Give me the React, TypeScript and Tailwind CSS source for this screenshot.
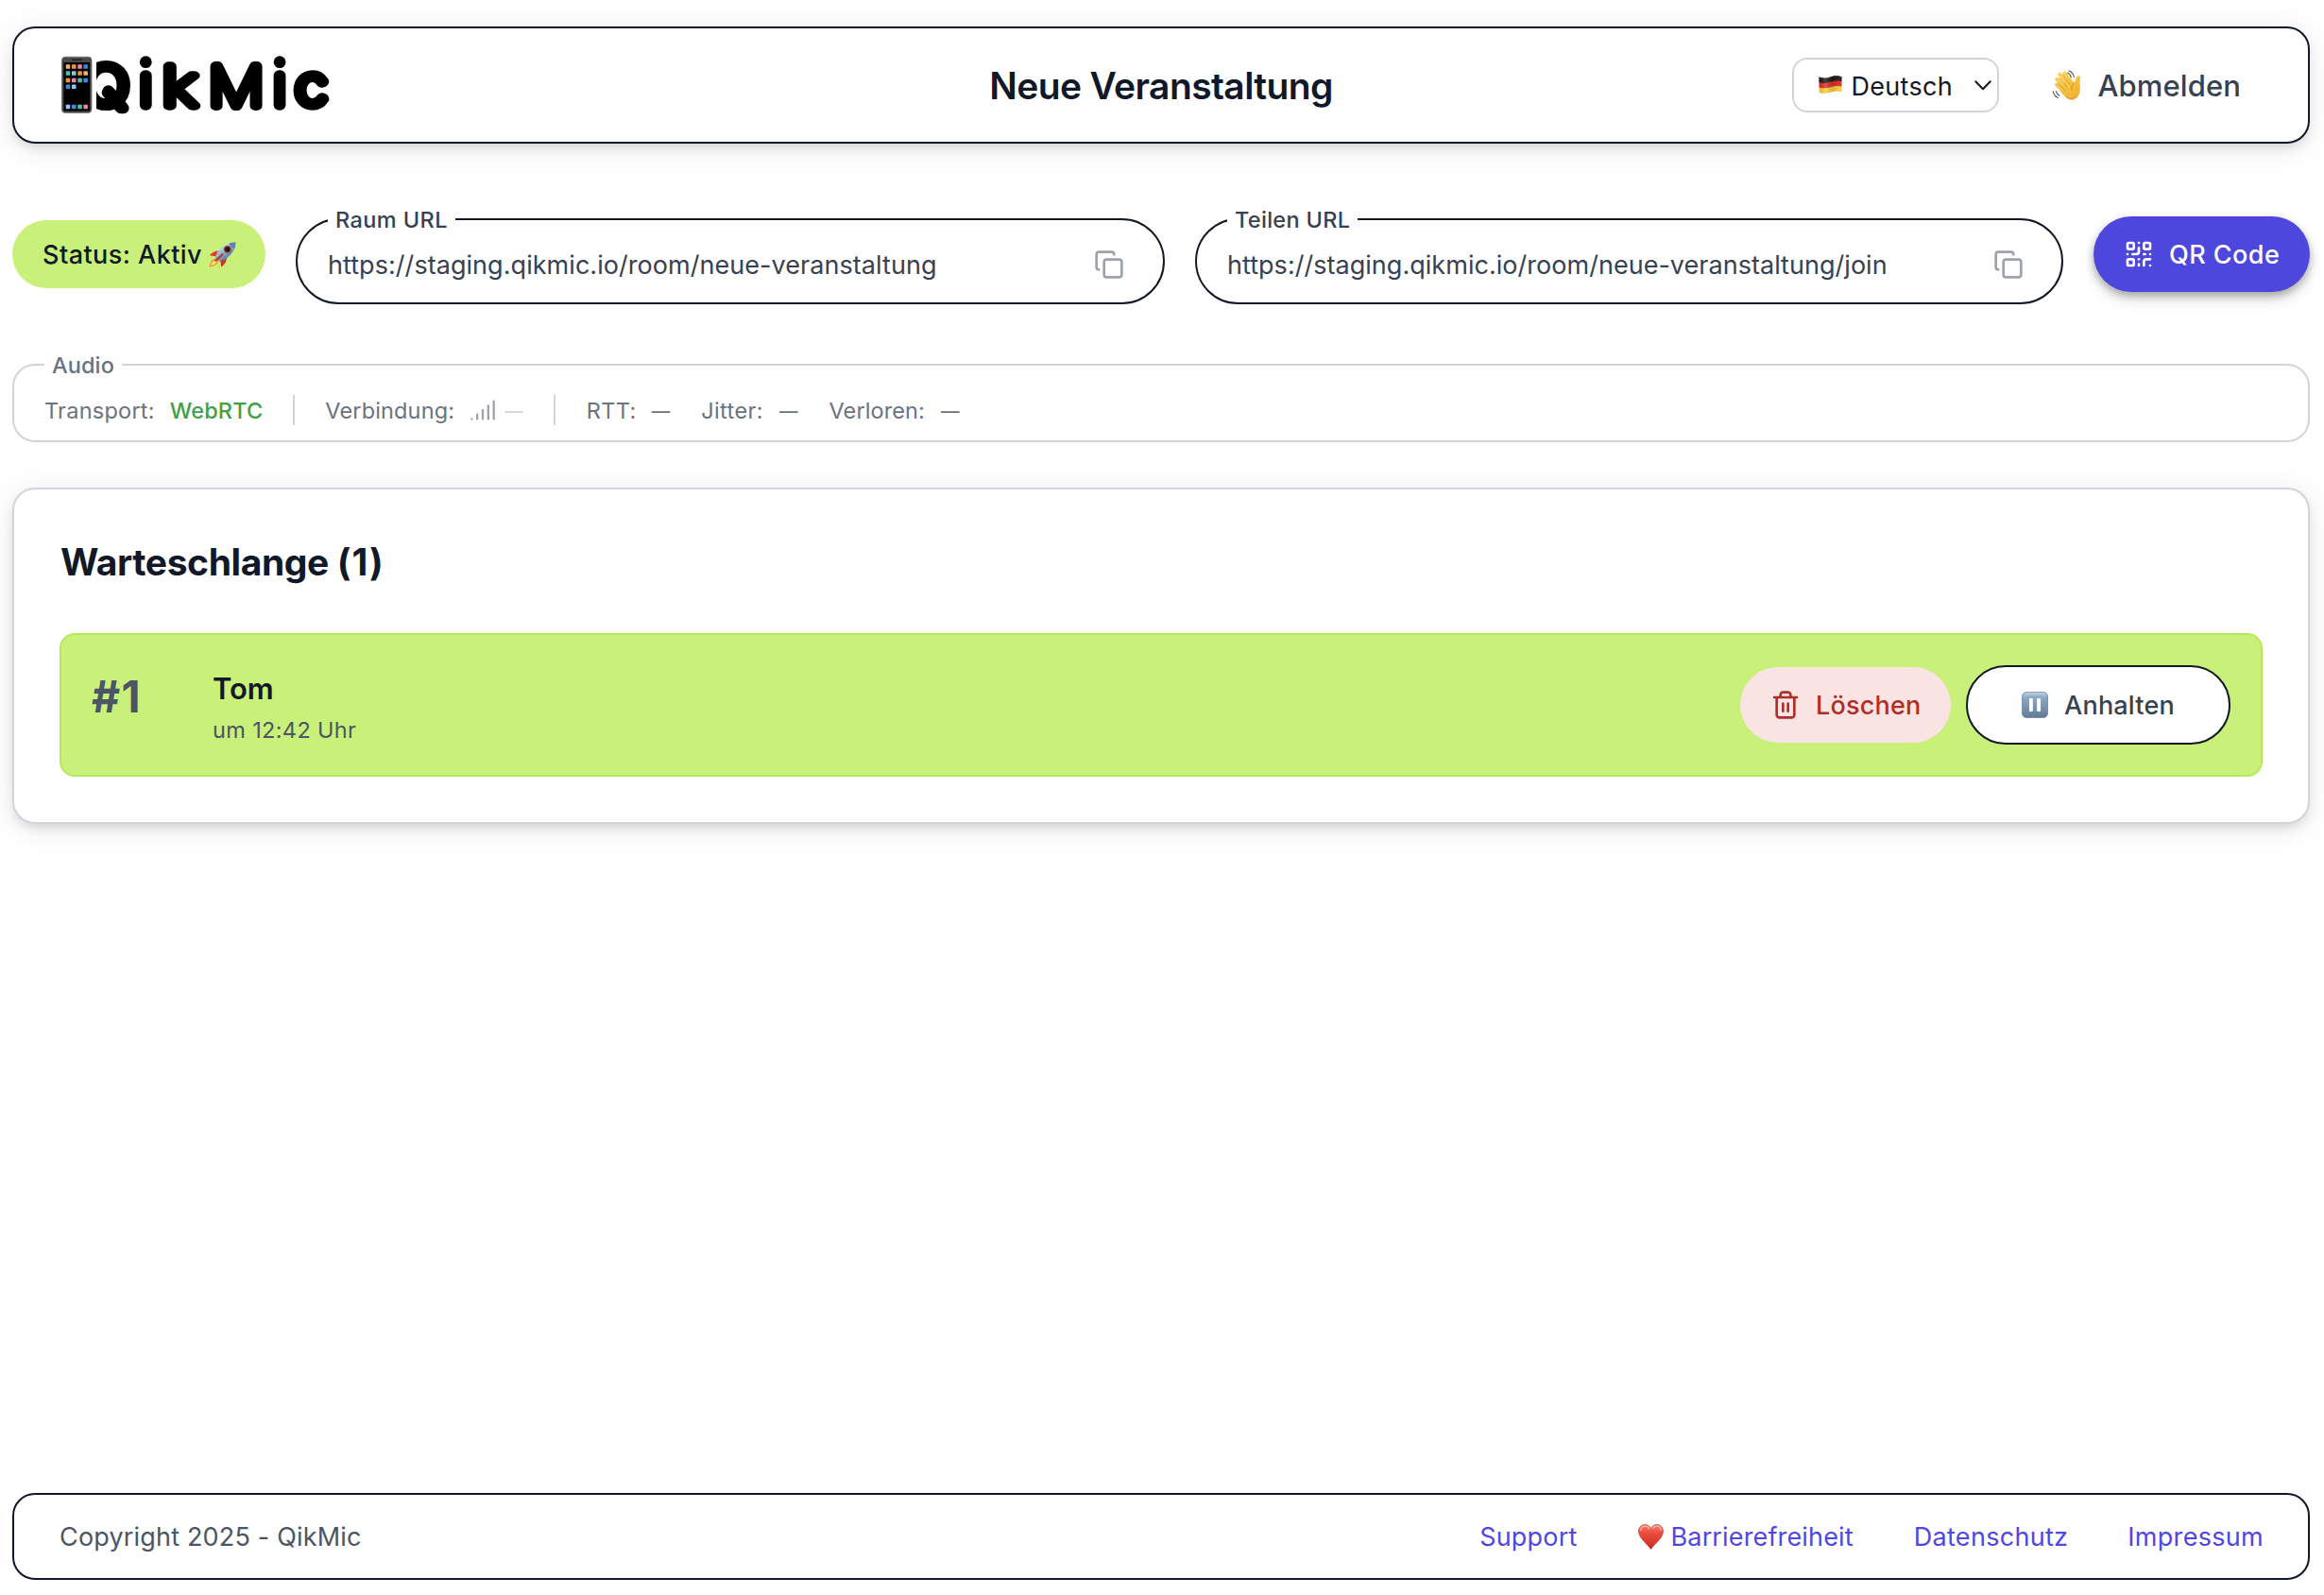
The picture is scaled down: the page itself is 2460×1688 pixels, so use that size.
import React from 'react';
import { Copy, QrCode, Signal } from 'lucide-react';

const APPS: [number, number, string][] = [
  [69.7, 68.3, '#e8b777'], [76, 68.3, '#ef9535'], [82.3, 68.3, '#ee82b0'], [88.4, 68.3, '#3d8bd4'],
  [69.7, 75.3, '#55bfa5'], [76, 75.3, '#8cc8f2'], [82.3, 75.3, '#ef9535'], [88.4, 75.3, '#e8b777'],
  [69.7, 82.7, '#ef9535'], [76, 82.7, '#ee82b0'], [82.3, 82.7, '#55bfa5'], [88.4, 82.7, '#3d8bd4'],
  [69.7, 89.5, '#3d8bd4'], [76, 89.5, '#8cc8f2'],
  [69.7, 110.8, '#8cc8f2'], [76, 110.8, '#3d8bd4'], [82.3, 110.8, '#55bfa5'], [88.4, 110.8, '#ee82b0'],
];

function Logo() {
  return (
    <svg viewBox="63 56 290 68" className="block h-[68px] w-[290px]" role="img" aria-label="QikMic">
      <g fontFamily="Inter" fontWeight="100" fontSize="56" fill="#000" stroke="#000" strokeWidth="11.6" strokeLinejoin="round" strokeLinecap="round">
        <text transform="translate(88.8 110.8) scale(1.13 1)">Q</text>
        <line x1="114.6" y1="96.4" x2="129" y2="113" strokeWidth="12.4" />
        <text transform="translate(148.2 110.8)">ı</text>
        <circle cx="154.3" cy="65.7" r="6.4" stroke="none" />
        <text transform="translate(171.4 111.9) scale(1.32 1)" fontSize="58" strokeWidth="9.4">k</text>
        <text transform="translate(221.1 111.5) scale(1.14 1)" fontSize="57" strokeWidth="10.2">M</text>
        <text transform="translate(290 110.8)">ı</text>
        <circle cx="296.1" cy="65.7" r="6.4" stroke="none" />
        <text transform="translate(313 110.8) scale(1.09 1)">c</text>
      </g>
      <rect x="63" y="56" width="39" height="68" fill="#fff" />
      <rect x="65.4" y="60.2" width="31.6" height="59.2" rx="3.6" fill="#4a4a4a" stroke="#777" strokeWidth="0.8" />
      <rect x="67.4" y="66" width="27.8" height="51.6" rx="1" fill="#000" />
      <rect x="76" y="62.6" width="11" height="1.3" rx="0.6" fill="#222" />
      {APPS.map(([x, y, c], i) => <rect key={i} x={x} y={y} width="4.5" height="4.5" rx="0.5" fill={c} />)}
    </svg>
  );
}

function FlagIcon() {
  return (
    <svg viewBox="0 0 25 20" className="h-5 w-[25px] shrink-0">
      <defs>
        <clipPath id="flag"><path d="M.6 1.6C5 3.2 8.500 2.800 12.500 1.400S20.500 -.2 24.400 1.200V17.400C20.500 16 16.500 16.400 12.500 17.800S5 19.400.6 18z" /></clipPath>
        <linearGradient id="flag-shade" x1="0" x2="1" y1="0" y2="0">
          <stop offset="0" stopColor="#000" stopOpacity=".1" /><stop offset=".3" stopColor="#fff" stopOpacity=".18" /><stop offset=".6" stopColor="#000" stopOpacity=".14" /><stop offset="1" stopColor="#fff" stopOpacity=".08" />
        </linearGradient>
      </defs>
      <g clipPath="url(#flag)">
        <rect width="25" height="20" fill="#f7cf3c" />
        <path d="M0 -2H25V11.600C20.500 10.400 16.500 10.800 12.500 12.200S5 13.800 0 12.400z" fill="#df2a20" />
        <path d="M0 -2H25V6.200C20.500 5 16.500 5.400 12.500 6.800S5 8.400 0 7z" fill="#1b1b1b" />
        <rect width="25" height="20" fill="url(#flag-shade)" />
      </g>
    </svg>
  );
}

function WaveIcon() {
  return (
    <svg viewBox="0 0 32 33" className="h-[33px] w-8 shrink-0">
      <defs>
        <linearGradient id="hand" gradientUnits="userSpaceOnUse" x1="6" y1="4" x2="24" y2="30"><stop offset="0" stopColor="#fbd65a" /><stop offset="1" stopColor="#f0b02f" /></linearGradient>
      </defs>
      <g fill="none" stroke="url(#hand)" strokeLinecap="round">
        <path d="M13.600 3.600 21 14" strokeWidth="4.100" />
        <path d="M8.300 4.700 17.500 17" strokeWidth="4.100" />
        <path d="M5.200 9.800 15 20.500" strokeWidth="4" />
        <path d="M4.800 15.600 14 24" strokeWidth="3.700" />
      </g>
      <path d="M10 19.500 20.500 10.500 23.500 13.800C25 12.500 24.600 10 25.700 8C26.600 6.200 29.400 5.600 30 7.200C30.200 9.500 29.400 12 29.600 15C30 20 30.400 24 27.400 28C24 32.400 19 32.600 15.400 29.500L8.500 22.500z" fill="url(#hand)" />
      <path d="M11.300 4.800 18.600 14.600M7.600 8.700 16 18.200M6.200 14 14.200 21.700M23.500 13.800C21 15.500 20.200 18.500 21.200 21.500" fill="none" stroke="#c98417" strokeWidth=".8" strokeLinecap="round" />
      <path d="M14.500 28.200C18.500 31.600 23.500 31.400 26.800 27.900" fill="none" stroke="#c98417" strokeWidth="1" strokeLinecap="round" opacity=".5" />
      <g fill="none" stroke="#565656" strokeWidth="1.100" strokeLinecap="round">
        <path d="M16.600 3C18.600 4 19.900 5.800 20.400 8M18.200.9C21.200 2 23 4.800 23.400 7.800" />
        <path d="M4.300 22.600C4.900 24.700 6.200 26.200 8 27.200M1.200 22.900C1.900 25.900 3.800 28.200 6.300 29.400" />
      </g>
    </svg>
  );
}

function RocketIcon() {
  return (
    <svg viewBox="0 0 29 27" className="h-[27px] w-[29px] shrink-0">
      <defs>
        <linearGradient id="rocket" x1=".2" y1=".1" x2=".8" y2=".9"><stop offset="0" stopColor="#d9eaf5" /><stop offset=".45" stopColor="#8fb3d0" /><stop offset="1" stopColor="#3f6288" /></linearGradient>
      </defs>
      <path d="M7 17.500C3.500 18.500 1.200 22 .8 26.400C4.500 26.200 8.600 24.500 10.200 20.800z" fill="#f08a24" />
      <path d="M6.600 19.200C4 20.300 2.500 23 2 25.300C4.600 25 7.600 23.400 8.900 20.800z" fill="#fbe26b" />
      <path d="M11.500 9.500C7.500 9 3.500 10.600 .8 14.300L8.200 15.500z" fill="#e4402f" />
      <path d="M19 16.600C18.900 20.500 17 24.200 13 26.400L12.400 19.400z" fill="#d0301f" />
      <path d="M28.400.6C21.500.2 14.500 3.500 9.500 10.500L6.600 16.600 11.200 20.800 17.800 18.200C24.500 13.500 28.600 7.500 28.400.6z" fill="url(#rocket)" />
      <path d="M28.400.6C26 .4 23.600.8 21.400 1.500C22.400 4 24.400 6.200 27.100 7.300C28 5.300 28.500 3 28.400.6z" fill="#5c84ae" />
      <circle cx="19.800" cy="7.800" r="3.900" fill="#b5342a" />
      <circle cx="19.800" cy="7.800" r="2.600" fill="#191919" />
      <path d="M7.400 19.700 14.500 13.200" stroke="#c2321f" strokeWidth="2.200" strokeLinecap="round" />
    </svg>
  );
}

function PauseIcon() {
  return (
    <svg viewBox="0 0 28 28" className="h-7 w-7 shrink-0">
      <defs>
        <linearGradient id="pause" x1="0" y1="0" x2="0" y2="1"><stop offset="0" stopColor="#c3d5e6" /><stop offset=".2" stopColor="#8ea9c4" /><stop offset="1" stopColor="#647a95" /></linearGradient>
      </defs>
      <rect x=".4" y=".4" width="27.200" height="27.200" rx="5" fill="url(#pause)" stroke="#66809c" strokeWidth=".8" />
      <rect x="8" y="7" width="3.800" height="14" rx=".8" fill="#fff" />
      <rect x="16.200" y="7" width="3.800" height="14" rx=".8" fill="#fff" />
    </svg>
  );
}

function HeartIcon() {
  return (
    <svg viewBox="0 0 27 27" className="h-[27px] w-[27px] shrink-0">
      <defs>
        <linearGradient id="heart" x1="0" y1="0" x2="0" y2="1"><stop offset="0" stopColor="#f47b6a" /><stop offset=".35" stopColor="#ec4c3c" /><stop offset="1" stopColor="#c92c20" /></linearGradient>
      </defs>
      <path d="M13.500 4.400C15 1.600 17.400.5 20 .5C23.800.5 26.500 3.500 26.500 7.600C26.500 14.500 18 20.500 13.500 26.500C9 20.500.5 14.500.5 7.600C.5 3.500 3.200.5 7 .5C9.600.5 12 1.600 13.500 4.400z" fill="url(#heart)" stroke="#b93428" strokeWidth=".6" />
      <path d="M2.800 6.500C3.200 3.600 5 2.200 7.200 2.200S10.800 3.200 11.600 4.800M15.800 4.400C16.800 2.900 18.200 2.200 20 2.200S23.600 3.400 24.200 6" fill="none" stroke="#fff" strokeOpacity=".55" strokeWidth="1.300" strokeLinecap="round" />
    </svg>
  );
}

function TrashIcon() {
  return (
    <svg viewBox="0 0 24 24" className="h-8 w-8 shrink-0" fill="none" stroke="currentColor" strokeWidth="2" strokeLinecap="round" strokeLinejoin="round">
      <path d="M3 6h18M19 6v14c0 1-1 2-2 2H7c-1 0-2-1-2-2V6M8 6V4c0-1 1-2 2-2h4c1 0 2 1 2 2v2M10 11v6M14 11v6" />
    </svg>
  );
}

function SelectChevron() {
  return (
    <svg viewBox="0 0 18 11" className="ml-auto h-[11px] w-[18px] shrink-0" fill="none" stroke="#111827" strokeWidth="2" strokeLinecap="round" strokeLinejoin="round">
      <path d="M1.300 1.300 9 9.300 16.700 1.300" />
    </svg>
  );
}

function UrlField({ label, url, fieldClass, labelClass, urlClass }: { label: string; url: string; fieldClass: string; labelClass: string; urlClass: string }) {
  return (
    <div className={`relative mt-0.5 flex h-[91px] min-w-0 flex-1 items-start justify-between rounded-full border-2 border-[#111827] pl-8 pt-7 ${fieldClass}`}>
      <span className={`absolute -top-4 left-8 bg-white px-2 text-[23.5px] leading-8 font-medium text-[#374151] ${labelClass}`}>{label}</span>
      <span className={`text-[27px] leading-10 text-[#374151] ${urlClass}`}>{url}</span>
      <Copy className="mt-[3px] h-8 w-8 text-[#9ca3af]" strokeWidth={2} />
    </div>
  );
}

function Dash({ className }: { className: string }) {
  return <span className={`pt-0.5 text-[19.5px] leading-8 font-medium ${className}`}>—</span>;
}

export default function App() {
  return (
    <div className="flex h-[1688px] w-[2460px] flex-col overflow-hidden bg-white pt-7 pr-[15px] pb-4 pl-[13px] font-['Inter',sans-serif] text-[#111827]">
      <header className="grid h-[124px] shrink-0 grid-cols-[1fr_auto_1fr] items-center rounded-[24px] border-2 border-[#111827] bg-white px-12 shadow-[0_6px_12px_-2px_rgba(0,0,0,0.13),0_4px_36px_rgba(0,0,0,0.08)]">
        <Logo />
        <h1 className="pt-0.5 text-[39px] leading-[56px] font-semibold tracking-[-0.6px]">Neue Veranstaltung</h1>
        <div className="flex items-center justify-end pr-[23px]">
          <button className="flex h-[58px] w-[219px] items-center rounded-[16px] border-2 border-[#d1d5db] bg-white pr-1.5 pl-[26px]">
            <FlagIcon />
            <span className="ml-[9px] pt-[3px] text-[27px] leading-10 tracking-[0.3px]">Deutsch</span>
            <SelectChevron />
          </button>
          <a className="ml-[56px] flex items-center gap-4 text-[31px] leading-10 font-medium tracking-[0.1px] text-[#374151]">
            <WaveIcon />
            <span className="pt-0.5">Abmelden</span>
          </a>
        </div>
      </header>

      <section className="mt-[77px] flex h-[93px] shrink-0 items-start gap-8">
        <div className="mt-1 flex h-[72px] w-[268px] items-center gap-[7px] rounded-full bg-[#c9f179] pl-8 text-[27px] font-medium tracking-[0.45px]">
          <span className="pt-0.5">Status: Aktiv</span>
          <RocketIcon />
        </div>
        <UrlField label="Raum URL" url="https://staging.qikmic.io/room/neue-veranstaltung" fieldClass="pr-[41px]" labelClass="tracking-[0.4px]" urlClass="tracking-[0.05px]" />
        <UrlField label="Teilen URL" url="https://staging.qikmic.io/room/neue-veranstaltung/join" fieldClass="pr-10" labelClass="tracking-[0.3px]" urlClass="tracking-[0.03px]" />
        <button className="flex h-20 w-[229px] items-center gap-4 rounded-full bg-[#4e47dd] pl-8 text-[27px] font-medium tracking-[0.45px] text-white shadow-[0_4px_8px_rgba(0,0,0,0.28),0_8px_16px_rgba(0,0,0,0.12)]">
          <QrCode className="h-8 w-8" strokeWidth={2} />
          <span className="pt-0.5">QR Code</span>
        </button>
      </section>

      <section className="relative mt-[63px] flex h-[83px] shrink-0 items-start rounded-[24px] border-2 border-[#d1d5db] pt-[31px] pl-8 text-[23.5px] leading-8 text-[#6b7280]">
        <span className="absolute -top-4 left-8 bg-white px-2 font-medium tracking-[0.1px]">Audio</span>
        <div className="flex h-8 items-center">
          <span className="pt-0.5 tracking-[0.25px]">Transport:</span>
          <span className="ml-4 pt-0.5 font-medium tracking-[0.1px] text-[#43a047]">WebRTC</span>
          <span className="ml-8 mr-8 h-8 w-0.5 bg-[#d1d5db]" />
          <span className="pt-0.5 tracking-[0.15px]">Verbindung:</span>
          <Signal className="ml-4 h-7 w-7 text-[#9ca3af]" strokeWidth={2} />
          <Dash className="ml-[9px] text-[#d1d5db]" />
          <span className="mr-[33px] ml-8 h-8 w-0.5 bg-[#d1d5db]" />
          <span className="pt-0.5 tracking-[0.4px]">RTT:</span>
          <Dash className="ml-4" />
          <span className="ml-[33px] pt-0.5 tracking-[0.4px]">Jitter:</span>
          <Dash className="ml-[17px]" />
          <span className="ml-[33px] pt-0.5 tracking-[0.1px]">Verloren:</span>
          <Dash className="ml-[17px]" />
        </div>
      </section>

      <main className="mt-12 h-[356px] shrink-0 rounded-[24px] border-2 border-[#d1d5db] bg-white px-12 pt-[49px] shadow-[0_6px_12px_-2px_rgba(0,0,0,0.13),0_4px_36px_rgba(0,0,0,0.08)]">
        <h2 className="pl-px text-[39px] leading-[56px] font-bold tracking-[-0.4px]">Warteschlange <span className="tracking-[1px]">(1)</span></h2>
        <div className="mt-[47px] flex h-[152px] items-start rounded-[16px] border-2 border-[#b5e95b] bg-[#c9f179] pt-8 pr-8 pl-8">
          <span className="w-32 text-[46.5px] leading-[66px] font-bold tracking-[1.4px] text-[#4b5563]">#1</span>
          <div className="flex flex-1 flex-col pt-px">
            <span className="text-[31px] leading-[48px] font-semibold tracking-[-0.1px]">Tom</span>
            <span className="text-[23.5px] leading-10 tracking-[0.35px] text-[#4b5563]">um 12:42 Uhr</span>
          </div>
          <div className="flex items-center gap-4">
            <button className="flex h-20 w-[223px] items-center gap-4 rounded-full bg-[#f9e4e3] pl-8 text-[27px] font-medium tracking-[0.2px] text-[#b02e28]">
              <TrashIcon />
              <span className="pt-0.5">Löschen</span>
            </button>
            <button className="flex h-[84px] w-[280px] items-center justify-center gap-[17px] rounded-full border-2 border-[#111827] bg-white text-[27px] font-medium tracking-[0.2px] text-[#374151]">
              <PauseIcon />
              <span className="pt-0.5">Anhalten</span>
            </button>
          </div>
        </div>
      </main>

      <footer className="mt-auto flex h-[92px] shrink-0 items-center justify-between rounded-[24px] border-2 border-[#111827] bg-white pr-[47px] pl-12 text-[27px]">
        <span className="pt-0.5 tracking-[0.18px] text-[#4b5563]">Copyright 2025 - QikMic</span>
        <nav className="flex items-center text-[#4f46e5]">
          <a className="pt-0.5 tracking-[0.2px]">Support</a>
          <a className="ml-16 flex items-center gap-2 tracking-[0.15px]"><HeartIcon /><span className="pt-0.5">Barrierefreiheit</span></a>
          <a className="ml-16 pt-0.5 tracking-[0.3px]">Datenschutz</a>
          <a className="ml-[63px] pt-0.5 tracking-[0.3px]">Impressum</a>
        </nav>
      </footer>
    </div>
  );
}
